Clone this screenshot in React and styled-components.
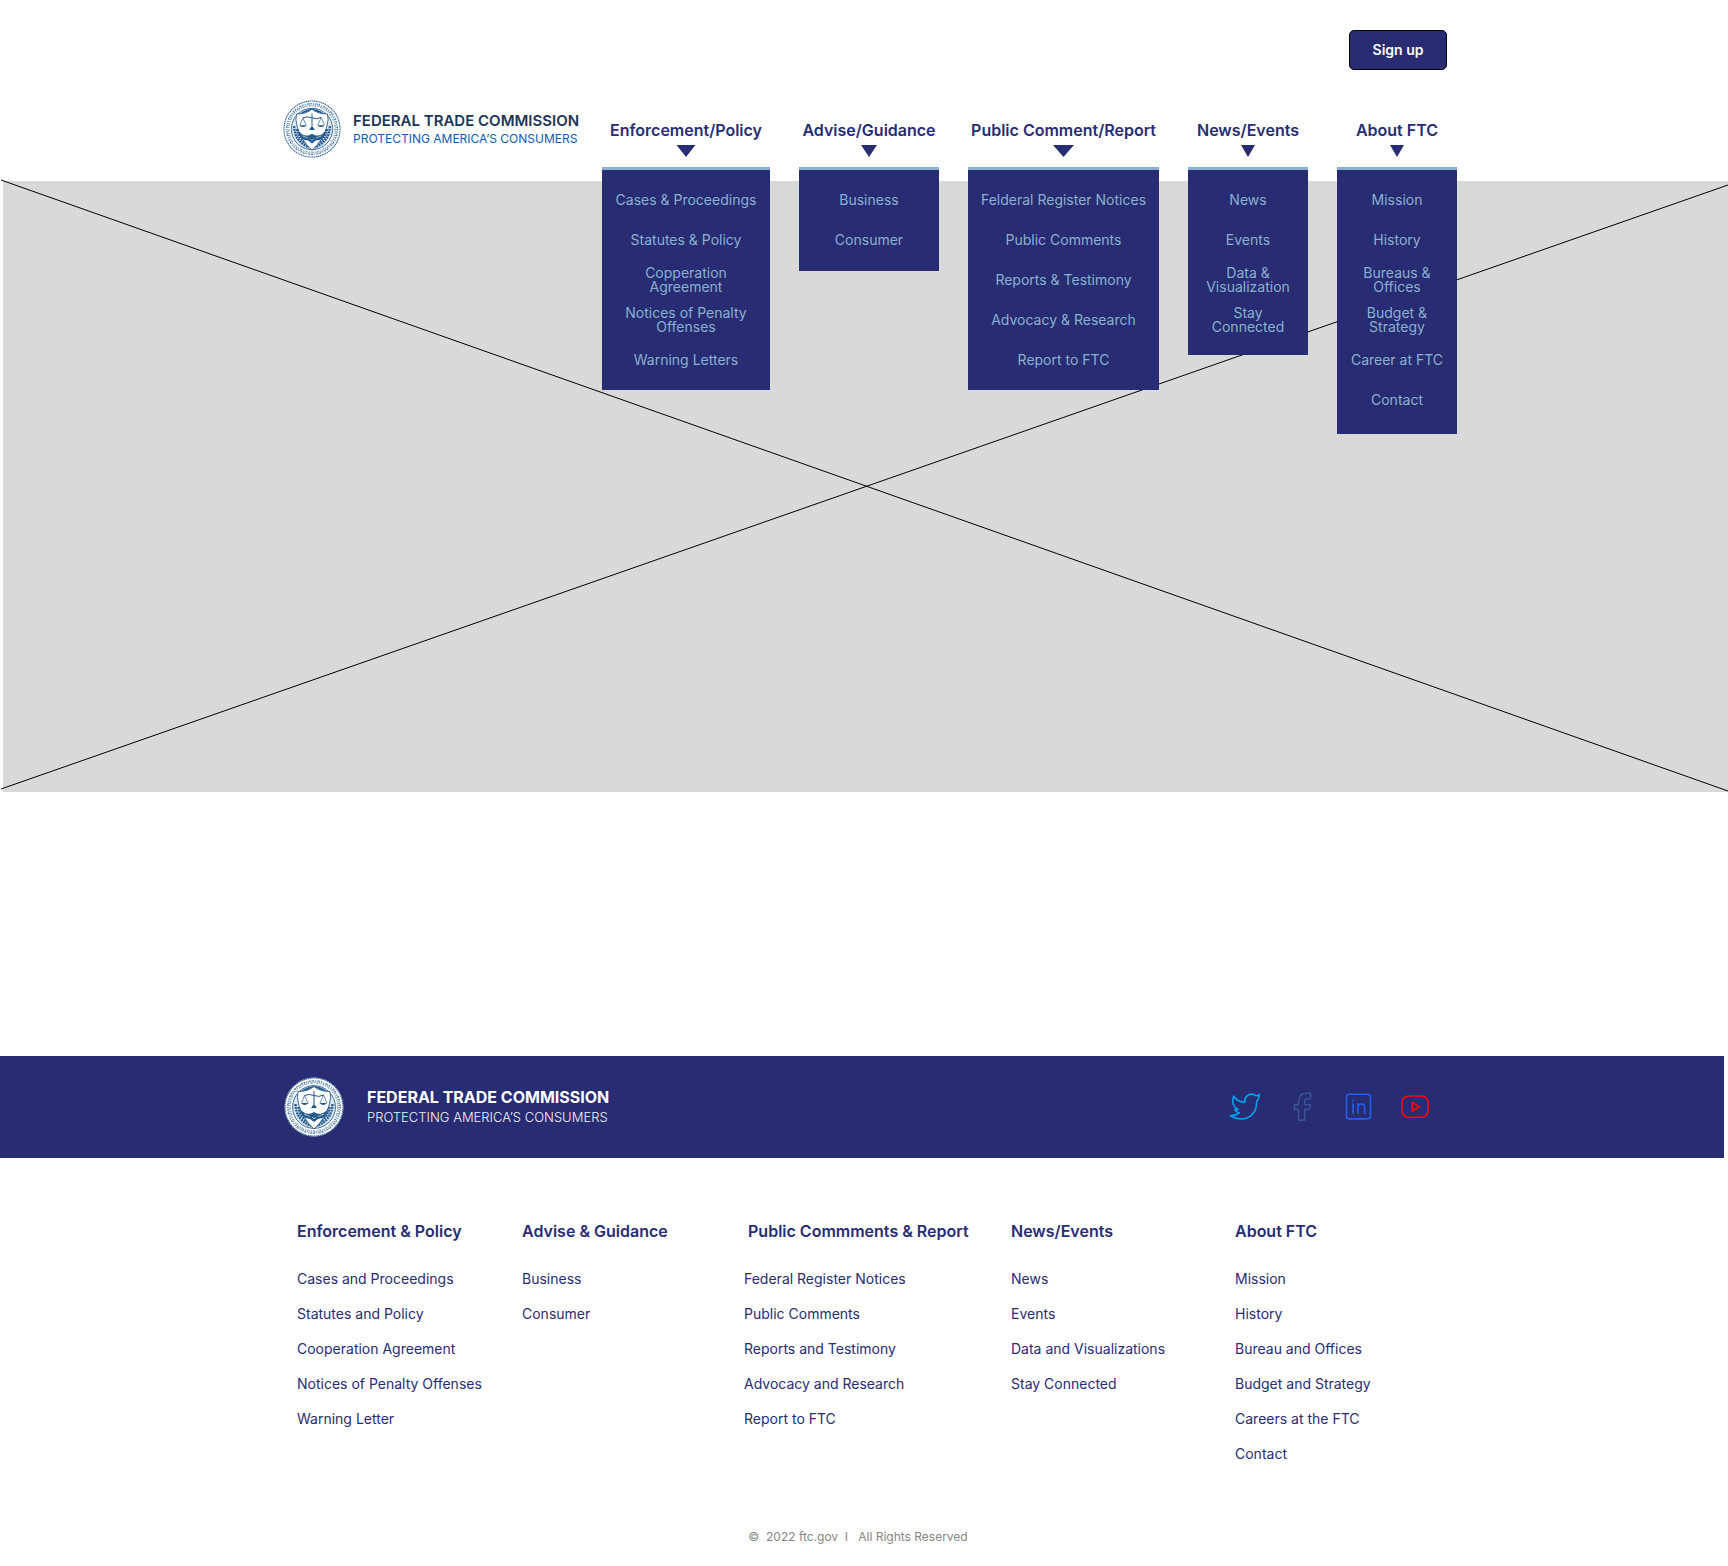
import React from "react";
import styled, { createGlobalStyle } from "styled-components";

const navy = "#282c72";
const sky = "#8bb0d1";

const GlobalStyle = createGlobalStyle`
  *, *::before, *::after { box-sizing: border-box; }
  body {
    margin: 0;
    background: #fff;
    color: ${navy};
    font-family: Inter, "Liberation Sans", sans-serif;
    overflow-x: hidden;
  }
  ul { list-style: none; margin: 0; padding: 0; }
  a { color: inherit; text-decoration: none; }
`;

const Container = styled.div`
  width: 100%;
  max-width: 1188px;
  margin: 0 auto;
`;

const Header = styled.header`
  padding-top: 30px;
`;

const TopBar = styled(Container)`
  display: flex;
  justify-content: flex-end;
  padding-right: 11px;
`;

const SignUp = styled.button`
  width: 98px;
  height: 40px;
  padding: 0;
  border: 1px solid #000;
  border-radius: 5px;
  background: ${navy};
  color: #fff;
  font: 600 14px/20px Inter, "Liberation Sans", sans-serif;
  cursor: pointer;
`;

const MainBar = styled(Container)`
  display: flex;
  justify-content: space-between;
  align-items: flex-start;
  height: 111px;
  padding: 30px 1px 0 13px;
`;

const Brand = styled.a`
  display: flex;
  align-items: center;
  gap: ${(p) => (p.$inverse ? 23 : 12)}px;
  color: ${(p) => (p.$inverse ? "#fff" : "#1d3557")};
`;

const BrandText = styled.span`
  display: flex;
  flex-direction: column;
  white-space: nowrap;
`;

const BrandName = styled.span`
  font-size: ${(p) => (p.$inverse ? 16 : 15)}px;
  line-height: 20px;
  font-weight: ${(p) => (p.$inverse ? 700 : 600)};
`;

const BrandTagline = styled.span`
  font-size: ${(p) => (p.$inverse ? 13 : 12)}px;
  line-height: ${(p) => (p.$inverse ? 20 : 16)}px;
  font-weight: ${(p) => (p.$inverse ? 300 : 400)};
  color: ${(p) => (p.$inverse ? "#f1f2fa" : "#0a5cb8")};
`;

const Nav = styled.nav`
  display: flex;
  gap: 29px;
  padding-top: 20px;
`;

const NavItem = styled.div`
  position: relative;
  width: ${(p) => p.$width}px;
  height: 61px;
`;

const NavButton = styled.button`
  display: flex;
  flex-direction: column;
  align-items: center;
  gap: 5px;
  width: 100%;
  padding: 0;
  border: 0;
  background: none;
  color: ${navy};
  font: 600 16px/20px Inter, "Liberation Sans", sans-serif;
  white-space: nowrap;
  cursor: pointer;
`;

const Caret = styled.span`
  width: ${(p) => p.$width}px;
  height: 12px;
  background: ${navy};
  clip-path: polygon(0 0, 100% 0, 50% 100%);
`;

const Menu = styled.ul`
  position: absolute;
  z-index: 1;
  top: 47px;
  left: 0;
  width: 100%;
  && { padding: 10px 8px ${(p) => p.$bottom}px; }
  border-top: 3px solid ${sky};
  background: ${navy};
`;

const MenuItem = styled.li`
  display: flex;
  align-items: center;
  justify-content: center;
  height: 40px;
  color: ${sky};
  font-size: 14px;
  line-height: 14px;
  text-align: center;
  white-space: pre;
`;

const Hero = styled.section`
  height: 611px;
  margin-left: 3px;
  background: #d9d9d9;
`;

const HeroCross = styled.svg`
  display: block;
  width: calc(100% + 3px);
  height: 100%;
  margin-left: -3px;
  overflow: visible;
`;

const Band = styled.div`
  margin: 264px 4px 0 0;
  background: ${navy};
`;

const BandInner = styled(Container)`
  display: flex;
  justify-content: space-between;
  align-items: center;
  height: 102px;
  padding: 0 24px 0 16px;
`;

const Social = styled.div`
  display: flex;
  gap: 25px;
`;

const SocialLink = styled.a`
  display: block;
  width: 32px;
  height: 32px;
  color: ${(p) => p.$color};

  svg {
    display: block;
    fill: none;
    stroke: currentColor;
    stroke-width: 1.6;
    stroke-linejoin: round;
    stroke-linecap: round;
  }
`;

const SiteMap = styled(Container)`
  display: grid;
  grid-template-columns: 225fr 222fr 267fr 224fr 223fr;
  padding: 61px 0 0 27px;
`;

const Column = styled.section`
  white-space: nowrap;
`;

const ColumnTitle = styled.h2`
  margin: 0 0 18px;
  font-size: 16px;
  line-height: 24px;
  font-weight: 600;
  white-space: pre;
`;

const ColumnItem = styled.li`
  font-size: 14px;
  line-height: 35px;
`;

const Legal = styled.p`
  margin: 56px 0 0;
  padding: 0 12px 20px 0;
  color: #858585;
  font-size: 12px;
  line-height: 20px;
  text-align: center;
  white-space: pre;
`;

const menus = [
  { label: "Enforcement/Policy", width: 168, caret: 19, bottom: 10,
    items: ["Cases & Proceedings", "Statutes & Policy", "Copperation\nAgreement", "Notices of Penalty\nOffenses", "Warning Letters"] },
  { label: "Advise/Guidance", width: 140, caret: 16, bottom: 11,
    items: ["Business", "Consumer"] },
  { label: "Public Comment/Report", width: 191, caret: 21, bottom: 10,
    items: ["Felderal Register Notices", "Public Comments", "Reports & Testimony", "Advocacy & Research", "Report to FTC"] },
  { label: "News/Events", width: 120, caret: 14, bottom: 15,
    items: ["News", "Events", "Data &\nVisualization", "Stay\nConnected"] },
  { label: "About FTC", width: 120, caret: 14, bottom: 14,
    items: ["Mission", "History", "Bureaus &\nOffices", "Budget &\nStrategy", "Career at FTC", "Contact"] },
];

const columns = [
  { title: "Enforcement & Policy",
    items: ["Cases and Proceedings", "Statutes and Policy", "Cooperation Agreement", "Notices of Penalty Offenses", "Warning Letter"] },
  { title: "Advise & Guidance", items: ["Business", "Consumer"] },
  { title: "\u00a0Public Commments & Report",
    items: ["Federal Register Notices", "Public Comments", "Reports and Testimony", "Advocacy and Research", "Report to FTC"] },
  { title: "News/Events", items: ["News", "Events", "Data and Visualizations", "Stay Connected"] },
  { title: "About FTC",
    items: ["Mission", "History", "Bureau and Offices", "Budget and Strategy", "Careers at the FTC", "Contact"] },
];

function Seal({ size }) {
  const blue = "#24598c";
  return (
    <svg width={size} height={size} viewBox="0 0 60 60" aria-hidden="true">
      <circle cx="30" cy="30" r="29.5" fill="#fff" />
      <circle cx="30" cy="30" r="29" fill="none" stroke={blue} strokeWidth="1.1" strokeDasharray="1.4 0.6" />
      <g fill="none" stroke={blue} opacity="0.75">
        <circle cx="30" cy="30" r="26.4" strokeWidth="1.2" strokeDasharray="1.6 1.4 0.8 1.6 2.2 1.1" />
        <circle cx="30" cy="30" r="25.1" strokeWidth="2" strokeDasharray="0.8 1.5 0.8 1.2" />
        <circle cx="30" cy="30" r="23.8" strokeWidth="1" strokeDasharray="1.9 1.4 0.9 1.8" />
      </g>
      <circle cx="30" cy="30" r="21.4" fill="#dfe9f2" stroke={blue} strokeWidth="0.9" />
      <path d="M13 19 Q19 10 30 9 Q41 10 47 19 L43 15 Q37 13 30 10 Q23 13 17 15Z" fill={blue} />
      <g fill="none" stroke={blue} strokeWidth="2.4" strokeDasharray="2 0.8">
        <path d="M11.5 27 Q12 43 27 49" />
        <path d="M14.5 30 Q16 41 26 46" />
        <path d="M48.5 27 Q48 43 33 49" />
        <path d="M45.5 30 Q44 41 34 46" />
      </g>
      <path d="M30 9.5 Q36 14.5 46 14.5 Q47.5 20 45.5 27 Q42 41 30 52 Q18 41 14.5 27 Q12.5 20 14 14.5 Q24 14.5 30 9.5Z" fill="#fff" stroke={blue} strokeWidth="0.9" />
      <g fill="none" stroke={blue} strokeWidth="1">
        <path d="M30 14 V30 M20.5 18.5 Q25 16.5 30 18.5 Q35 20.5 39.5 18" />
        <path d="M20.5 18.5 L17.5 26 M20.5 18.5 L24 26 M39.5 18 L36 26 M39.5 18 L43 26" strokeWidth="0.7" />
      </g>
      <path d="M16.8 26 H24.6 Q20.7 30 16.8 26Z M35.4 26 H43.2 Q39.3 30 35.4 26Z M27 31 H33 L31 28 H29Z" fill={blue} />
      <path d="M15.5 31 Q20 38 27 36.5 L30 35 L33 36.5 Q40 38 44.5 31 Q43 41.5 34 42 L30 45 L26 42 Q17 41.5 15.5 31Z" fill={blue} />
      <path d="M20 37 L26 39.5 M40 37 L34 39.5 M28 40 L30 42 L32 40" fill="none" stroke="#fff" strokeWidth="0.6" />
    </svg>
  );
}

function BrandMark({ inverse, size }) {
  return (
    <Brand href="#" $inverse={inverse}>
      <Seal size={size} />
      <BrandText>
        <BrandName $inverse={inverse}>FEDERAL TRADE COMMISSION</BrandName>
        <BrandTagline $inverse={inverse}>PROTECTING AMERICA’S CONSUMERS</BrandTagline>
      </BrandText>
    </Brand>
  );
}

const socials = [
  { name: "Twitter", color: "#05a2f2", art: (
    <path d="M30.5 3.3C29 4.5 27.8 4.8 26.6 4.7C22 .9 15.2 4.6 15.8 11.2C11.2 11.2 7.4 9 4.6 5.2C2.3 10.5 4.2 16 9.2 18.6C7.9 19 6.9 19 5.8 18.8C6.8 20.5 8.4 21.4 10.3 21.7C8 23.8 4.8 24.7 1.4 24.7C11.5 31 27.8 28.3 27.7 10.5C29.6 8.2 30.2 5.8 30.5 3.3Z" />
  ) },
  { name: "Facebook", color: "#39529a", art: (
    <path d="M24.5 2.3H21.5Q12.6 2.3 12.6 9.8V13.7H8.3V18.4H12.6V29.3H18.7V18.4H23.3L24.3 13.7H18.7V10Q18.7 7.8 21 7.8H24.5Z" />
  ) },
  { name: "LinkedIn", color: "#2460f0", art: (
    <>
      <rect x="3.5" y="3.3" width="24" height="24.6" rx="3" />
      <path d="M10 12.8V22.3M10 9.4V9.8M15 22.3V12.8M15 16.3Q15 13 18.3 13Q21.6 13 21.6 16.5V22.3" />
    </>
  ) },
  { name: "YouTube", color: "#fc0510", art: (
    <>
      <rect x="2" y="5" width="26" height="21.3" rx="6.5" />
      <path d="M12.2 11.2V20.2L19.3 15.7Z" />
    </>
  ) },
];

export default function App() {
  return (
    <>
      <GlobalStyle />
      <Header>
        <TopBar>
          <SignUp type="button">Sign up</SignUp>
        </TopBar>
        <MainBar>
          <BrandMark size={58} />
          <Nav aria-label="Main">
            {menus.map((m) => (
              <NavItem key={m.label} $width={m.width}>
                <NavButton type="button" aria-expanded="true">
                  {m.label}
                  <Caret $width={m.caret} />
                </NavButton>
                <Menu $bottom={m.bottom}>
                  {m.items.map((item) => (
                    <MenuItem key={item}><a href="#">{item}</a></MenuItem>
                  ))}
                </Menu>
              </NavItem>
            ))}
          </Nav>
        </MainBar>
      </Header>
      <main>
        <Hero>
          <HeroCross viewBox="0 0 1728 611" preserveAspectRatio="none" aria-hidden="true">
            <path d="M1 -1L1728 610M1 608L1728 4" stroke="#000" fill="none" vectorEffect="non-scaling-stroke" />
          </HeroCross>
        </Hero>
      </main>
      <footer>
        <Band>
          <BandInner>
            <BrandMark inverse size={60} />
            <Social>
              {socials.map((s) => (
                <SocialLink key={s.name} href="#" aria-label={s.name} $color={s.color}>
                  <svg width="32" height="32" viewBox="0 0 32 32" aria-hidden="true">{s.art}</svg>
                </SocialLink>
              ))}
            </Social>
          </BandInner>
        </Band>
        <SiteMap>
          {columns.map((c) => (
            <Column key={c.title}>
              <ColumnTitle>{c.title}</ColumnTitle>
              <ul>
                {c.items.map((item) => (
                  <ColumnItem key={item}><a href="#">{item}</a></ColumnItem>
                ))}
              </ul>
            </Column>
          ))}
        </SiteMap>
        <Legal>{"©  2022 ftc.gov  I   All Rights Reserved"}</Legal>
      </footer>
    </>
  );
}
